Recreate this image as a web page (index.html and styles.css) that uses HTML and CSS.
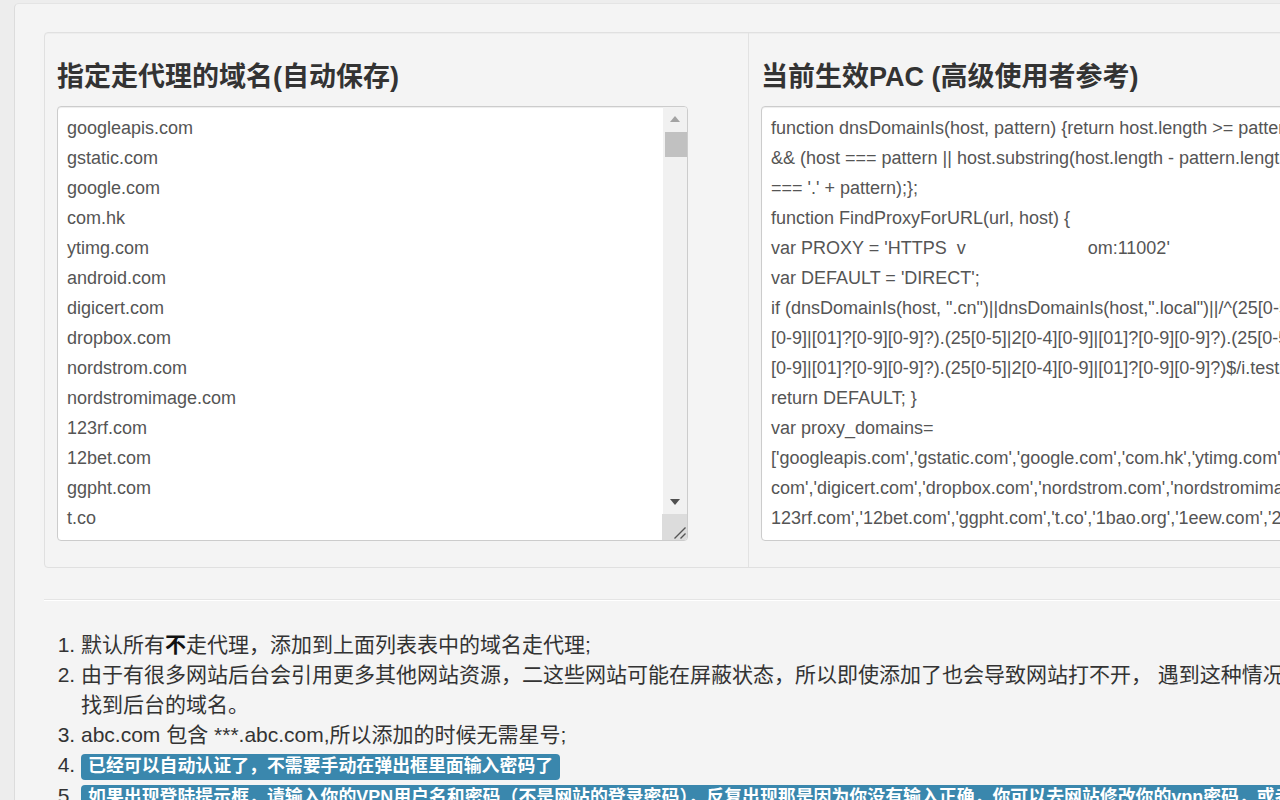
FILE: index.html
```html
<!DOCTYPE html>
<html lang="zh-CN">
<head>
<meta charset="utf-8">
<title>PAC 设置</title>
<link rel="stylesheet" href="styles.css">
</head>
<body>
<div class="main">
  <div class="well">
    <div class="col">
      <h4>指定走代理的域名(自动保存)</h4>
      <div class="box">
        <div class="box-text">googleapis.com
gstatic.com
google.com
com.hk
ytimg.com
android.com
digicert.com
dropbox.com
nordstrom.com
nordstromimage.com
123rf.com
12bet.com
ggpht.com
t.co</div>
        <div class="scrollbar">
          <div class="sb-btn"><span class="arrow-up"></span></div>
          <div class="sb-track"><div class="sb-thumb"></div></div>
          <div class="sb-btn"><span class="arrow-down"></span></div>
          <div class="resizer">
            <svg width="25" height="26" viewBox="0 0 25 26"><path d="M23.5 13.5 L12.5 24.5 M23.5 19.5 L18.5 24.5" stroke="#555" stroke-width="1.4" fill="none"/></svg>
          </div>
        </div>
      </div>
    </div>
    <div class="col">
      <h4>当前生效PAC (高级使用者参考)</h4>
      <div class="box box-wide">
        <div class="box-text">function dnsDomainIs(host, pattern) {return host.length &gt;= pattern.length
&amp;&amp; (host === pattern || host.substring(host.length - pattern.length)
=== '.' + pattern);};
function FindProxyForURL(url, host) {
var PROXY = 'HTTPS  v<span class="redact"></span>om:11002'
var DEFAULT = 'DIRECT';
if (dnsDomainIs(host, ".cn")||dnsDomainIs(host,".local")||/^(25[0-5]|2[0-4]
[0-9]|[01]?[0-9][0-9]?).(25[0-5]|2[0-4][0-9]|[01]?[0-9][0-9]?).(25[0-5]|2[0-4]
[0-9]|[01]?[0-9][0-9]?).(25[0-5]|2[0-4][0-9]|[01]?[0-9][0-9]?)$/i.test(host))
return DEFAULT; }
var proxy_domains=
['googleapis.com','gstatic.com','google.com','com.hk','ytimg.com','android.
com','digicert.com','dropbox.com','nordstrom.com','nordstromimage.com','
123rf.com','12bet.com','ggpht.com','t.co','1bao.org','1eew.com','2</div>
      </div>
    </div>
  </div>
  <hr class="sep">
  <ol class="notes">
    <li>默认所有<b>不</b>走代理，添加到上面列表表中的域名走代理;</li>
    <li>由于有很多网站后台会引用更多其他网站资源，二这些网站可能在屏蔽状态，所以即使添加了也会导致网站打不开， 遇到这种情况可以<br>找到后台的域名。</li>
    <li>abc.com 包含 ***.abc.com,所以添加的时候无需星号;</li>
    <li><span class="badge">已经可以自动认证了，不需要手动在弹出框里面输入密码了</span></li>
    <li><span class="badge">如果出现登陆提示框，请输入你的VPN用户名和密码（不是网站的登录密码），反复出现那是因为你没有输入正确，你可以去网站修改你的vpn密码，或者联系客服</span></li>
  </ol>
</div>
</body>
</html>
```
FILE: styles.css
```css
html, body {
  margin: 0;
  height: 100%;
  overflow: hidden;
}
body {
  background: #ededed;
  font-family: "Liberation Sans", Arial, "Noto Sans CJK SC", sans-serif;
  color: #333;
}
.main {
  margin: 3px 0 0 14px;
  width: 1600px;
  height: 797px;
  box-sizing: border-box;
  background: #f4f4f4;
  border-left: 1px solid #dcdcdc;
  border-top: 1px solid #e4e4e4;
  border-top-left-radius: 5px;
  padding: 28px 0 0 29px;
}
.well {
  display: grid;
  grid-template-columns: 703px 704px;
  width: max-content;
  border: 1px solid #e0e0e0;
  border-radius: 4px;
  background: #f4f4f4;
  box-shadow: inset 0 1px 1px rgba(0, 0, 0, 0.03);
}
.col {
  padding: 29px 12px 26px;
}
.col + .col {
  border-left: 1px solid #e2e2e2;
}
h4 {
  margin: 0 0 14px;
  font-size: 27px;
  line-height: 30px;
  font-weight: bold;
  color: #333;
}
.box {
  display: flex;
  width: 631px;
  height: 435px;
  box-sizing: border-box;
  background: #fff;
  border: 1px solid #ccc;
  border-radius: 4px;
  overflow: hidden;
  box-shadow: inset 0 1px 1px rgba(0, 0, 0, 0.075);
}
.box-wide {
  width: 650px;
}
.box-text {
  flex: 1;
  min-width: 0;
  padding: 6px 9px 4px;
  font-size: 18px;
  line-height: 30px;
  color: #555;
  white-space: pre;
  overflow: hidden;
}
.redact {
  display: inline-block;
  width: 122px;
  height: 1px;
}
.scrollbar {
  width: 24px;
  display: flex;
  flex-direction: column;
  background: #f1f1f1;
}
.sb-btn {
  height: 24px;
  display: flex;
  align-items: center;
  justify-content: center;
}
.arrow-up {
  width: 0;
  height: 0;
  border-left: 5.5px solid transparent;
  border-right: 5.5px solid transparent;
  border-bottom: 6px solid #a3a3a3;
}
.arrow-down {
  width: 0;
  height: 0;
  border-left: 5.5px solid transparent;
  border-right: 5.5px solid transparent;
  border-top: 6px solid #505050;
}
.sb-track {
  flex: 1;
}
.sb-thumb {
  margin: 1px 0 0 2px;
  height: 25px;
  background: #c1c1c1;
}
.resizer {
  height: 26px;
  background: #dcdcdc;
  margin-left: -1px;
}
.resizer svg {
  display: block;
}
.sep {
  margin: 31px 0 0;
  height: 0;
  border: 0;
  border-top: 1px solid #e4e4e4;
  border-bottom: 1px solid #ffffff;
}
.notes {
  margin: 29px 0 0;
  padding-left: 37px;
  font-size: 21px;
  line-height: 30px;
  color: #333;
}
.notes b {
  color: #111;
}
.badge {
  background: #3a87ad;
  color: #fff;
  font-weight: bold;
  font-size: 17.9px;
  padding: 2px 7px 4px;
  border-radius: 4px;
}
```
